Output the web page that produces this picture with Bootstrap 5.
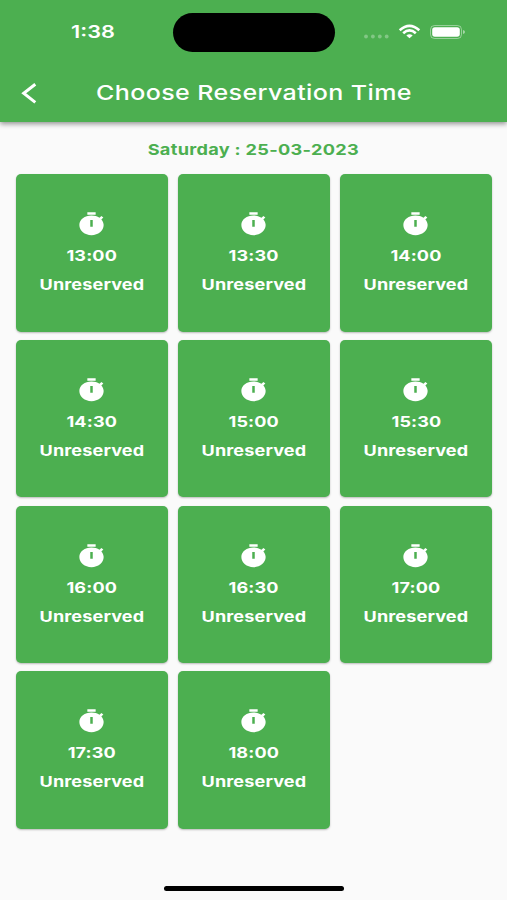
<!DOCTYPE html>
<html lang="en">
<head>
<meta charset="utf-8">
<meta name="viewport" content="width=device-width, initial-scale=1">
<title>Choose Reservation Time</title>
<link href="https://cdn.jsdelivr.net/npm/bootstrap@5.3.0/dist/css/bootstrap.min.css" rel="stylesheet">
<style>
  body { background: #fafafa; font-family: Inter, "Liberation Sans", sans-serif; }
  .screen { height: 900px; width: 507px; overflow: hidden; }
  .app-header { background: #4caf50; height: 122px; box-shadow: 0 2px 5px rgba(0,0,0,.42); z-index: 1; }
  .status-bar { height: 64px; }
  .wide { display: inline-block; white-space: nowrap; transform: scaleX(var(--sx, 1.2)); }
  .clock { width: 173px; padding-left: 13px; font-size: 17.8px; font-weight: 600; --sx: 1.22; }
  .island { width: 162px; height: 39px; background: #000; }
  .signals { width: 172px; padding-left: 29px; }
  .title-bar { height: 58px; padding-top: 1px; }
  .back-btn { width: 60px; padding-left: 21px; }
  .title-box { padding-right: 60px; }
  .page-title { font-size: 20.6px; font-weight: 500; letter-spacing: .32px; --sx: 1.215; }
  .date-line { height: 52px; padding-top: 5px; font-size: 15px; font-weight: 700; letter-spacing: .25px; color: #4caf50; --sx: 1.21; }
  .slots { padding: 0 15px 0 16px; }
  .slots .row { --bs-gutter-x: 10px; --bs-gutter-y: 8.3px; }
  .slot { height: 157.5px; background: #4caf50; border-radius: 5px; box-shadow: 0 1px 2px rgba(0,0,0,.26); font-size: 14.8px; font-weight: 700; letter-spacing: .12px; line-height: 20px; padding-top: 37px; --sx: 1.22; }
  .slot svg { margin-bottom: 9px; }
  .slot-time { margin-bottom: 9px; }
  .home-bar { width: 180px; height: 5px; background: #000; margin-bottom: 9px; }
</style>
</head>
<body>
<svg class="d-none" xmlns="http://www.w3.org/2000/svg">
  <symbol id="timer" viewBox="0 0 26 26" preserveAspectRatio="none">
    <path fill="#fff" fill-rule="evenodd" d="M9 1.300h8v2.400H9zM13 4.500c3 0 5.600.9 7.700 2.300l1.800-1.700 1.900 1.500-1.900 1.800c1.400 1.600 2.200 3.600 2.200 5.700 0 5.600-5.200 10.100-11.700 10.100S1.300 19.700 1.300 14.100 6.500 4.500 13 4.500zM11.800 9.100v6.600h2.400V9.100z"/>
  </symbol>
</svg>
<div class="screen d-flex flex-column">
  <header class="app-header flex-shrink-0 text-white position-relative">
    <div class="status-bar d-flex align-items-center">
      <div class="clock text-center"><span class="wide">1:38</span></div>
      <div class="island rounded-pill"></div>
      <div class="signals">
        <svg class="d-block" width="104" height="20" viewBox="0 0 104 20" fill="none">
          <g fill="#fff" opacity=".3"><circle cx="2" cy="14.500" r="1.900"/><circle cx="8.900" cy="14.500" r="1.900"/><circle cx="15.800" cy="14.500" r="1.900"/><circle cx="22.700" cy="14.500" r="1.900"/></g>
          <g stroke="#fff" stroke-width="2.600"><path d="M35.700 8.200Q45.500-.400 55.300 8.200"/><path d="M39.200 11.300Q45.500 5.500 51.800 11.300"/></g>
          <path fill="#fff" d="M42.300 13.400Q45.500 10.900 48.700 13.400L45.500 16.300z"/>
          <rect x="66.500" y="3.500" width="31" height="13" rx="4" stroke="#fff" stroke-opacity=".42"/>
          <rect x="68.200" y="5.200" width="27.600" height="9.600" rx="2.700" fill="#fff"/>
          <path fill="#fff" fill-opacity=".5" d="M99 8q2 .6 2 2t-2 2z"/>
        </svg>
      </div>
    </div>
    <div class="title-bar d-flex align-items-center">
      <a class="back-btn" href="#" aria-label="Back">
        <svg class="d-block" width="17" height="22" viewBox="0 0 17 22" fill="none" stroke="#fff" stroke-width="3"><path d="M14.300 1.200L2.700 10.300l11.600 9.100"/></svg>
      </a>
      <div class="title-box flex-grow-1 text-center"><span class="wide page-title">Choose Reservation Time</span></div>
    </div>
  </header>
  <main class="flex-grow-1">
    <div class="date-line d-flex align-items-center justify-content-center"><span class="wide">Saturday : 25-03-2023</span></div>
    <div class="slots"><div class="row row-cols-3" id="slots"></div></div>
  </main>
  <div class="home-bar rounded-pill mx-auto flex-shrink-0"></div>
</div>
<script>
  const times = ["13:00", "13:30", "14:00", "14:30", "15:00", "15:30", "16:00", "16:30", "17:00", "17:30", "18:00"];
  document.getElementById("slots").innerHTML = times.map(t => `
    <div class="col"><div class="slot d-flex flex-column align-items-center text-white">
      <svg width="27" height="26"><use href="#timer"/></svg>
      <span class="wide slot-time">${t}</span>
      <span class="wide">Unreserved</span>
    </div></div>`).join("");
</script>
<script src="https://cdn.jsdelivr.net/npm/bootstrap@5.3.0/dist/js/bootstrap.bundle.min.js"></script>
</body>
</html>
